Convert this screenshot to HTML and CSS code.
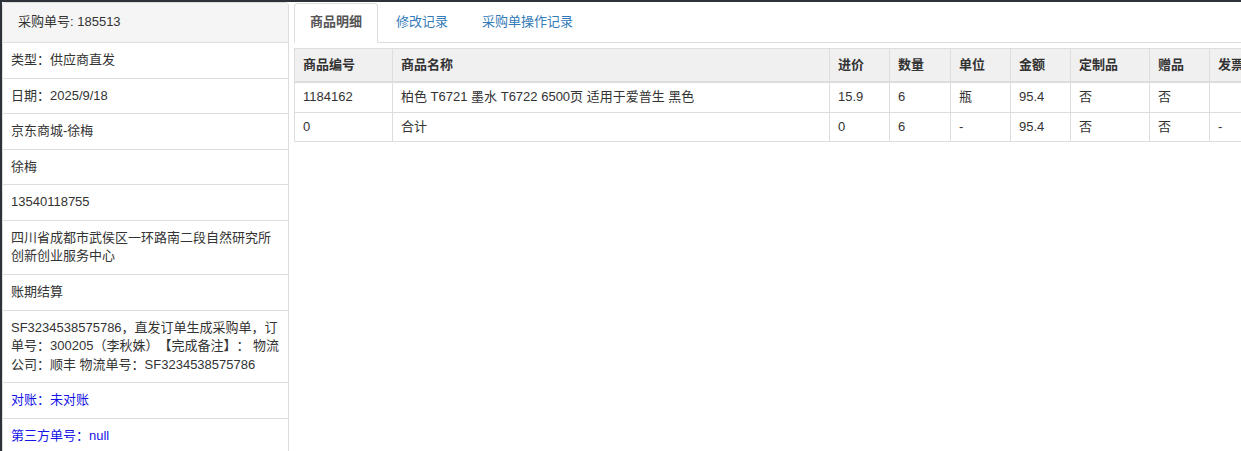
FILE: index.html
```html
<!DOCTYPE html>
<html lang="zh-CN">
<head>
    <meta charset="UTF-8">
    <title>采购单详情</title>
    <link rel="stylesheet" href="styles.css">
</head>
<body>
    <div class="page">
        <div class="panel">
            <div class="panel-heading">采购单号: 185513</div>
            <div class="panel-row">类型：供应商直发</div>
            <div class="panel-row">日期：2025/9/18</div>
            <div class="panel-row">京东商城-徐梅</div>
            <div class="panel-row">徐梅</div>
            <div class="panel-row">13540118755</div>
            <div class="panel-row">四川省成都市武侯区一环路南二段自然研究所创新创业服务中心</div>
            <div class="panel-row">账期结算</div>
            <div class="panel-row">SF3234538575786，直发订单生成采购单，订单号：300205（李秋姝）【完成备注】： 物流公司：顺丰 物流单号：SF3234538575786</div>
            <div class="panel-row blue">对账：未对账</div>
            <div class="panel-row blue">第三方单号：null</div>
        </div>

        <div class="main">
            <ul class="tabs">
                <li class="active"><a>商品明细</a></li>
                <li><a>修改记录</a></li>
                <li><a>采购单操作记录</a></li>
            </ul>

            <table class="goods">
                <colgroup>
                    <col style="width:98px">
                    <col style="width:437px">
                    <col style="width:60px">
                    <col style="width:61px">
                    <col style="width:60px">
                    <col style="width:60px">
                    <col style="width:79px">
                    <col style="width:60px">
                    <col style="width:80px">
                </colgroup>
                <thead>
                    <tr>
                        <th>商品编号</th>
                        <th>商品名称</th>
                        <th>进价</th>
                        <th>数量</th>
                        <th>单位</th>
                        <th>金额</th>
                        <th>定制品</th>
                        <th>赠品</th>
                        <th>发票</th>
                    </tr>
                </thead>
                <tbody>
                    <tr>
                        <td>1184162</td>
                        <td>柏色 T6721 墨水 T6722 6500页 适用于爱普生 黑色</td>
                        <td>15.9</td>
                        <td>6</td>
                        <td>瓶</td>
                        <td>95.4</td>
                        <td>否</td>
                        <td>否</td>
                        <td></td>
                    </tr>
                    <tr>
                        <td>0</td>
                        <td>合计</td>
                        <td>0</td>
                        <td>6</td>
                        <td>-</td>
                        <td>95.4</td>
                        <td>否</td>
                        <td>否</td>
                        <td>-</td>
                    </tr>
                </tbody>
            </table>
        </div>
    </div>
</body>
</html>
```

FILE: styles.css
```css
html, body {
    margin: 0;
    padding: 0;
    height: 100%;
    overflow: hidden;
}
body {
    background: #2d3238;
    font-family: "Liberation Sans", "Noto Sans CJK SC", sans-serif;
    font-size: 13px;
    line-height: 1.42857;
    color: #333;
    text-spacing-trim: space-all;
    font-feature-settings: "chws" 0, "halt" 0;
}
.page {
    display: flex;
    gap: 5px;
    margin: 2px 0 0 2px;
    background: #fff;
    min-height: 100%;
}
.panel {
    width: 285px;
    flex: none;
    border: 1px solid #ddd;
    border-radius: 4px 4px 0 0;
    align-self: flex-start;
}
.panel-heading {
    background: #f5f5f5;
    padding: 10px 15px 10px 15px;
    height: 19px;
    border-radius: 4px 4px 0 0;
}
.panel-row {
    border-top: 1px solid #ddd;
    padding: 8px 8px;
}
.blue {
    color: #1515e8;
}
.main {
    flex: 1;
    min-width: 0;
    overflow: hidden;
}
.tabs {
    list-style: none;
    margin: 0;
    padding: 0;
    display: flex;
    border-bottom: 1px solid #ddd;
}
.tabs li {
    margin: 0 2px -1px 0;
}
.tabs a {
    display: block;
    margin-top: 1px;
    padding: 9px 15px 10px;
    border: 1px solid transparent;
    border-radius: 4px 4px 0 0;
    color: #337ab7;
}
.tabs .active a {
    color: #555;
    font-weight: bold;
    background: #fff;
    border-color: #ddd #ddd transparent;
}
.goods {
    margin-top: 5px;
    border-collapse: collapse;
    table-layout: fixed;
    width: 995px;
}
.goods th, .goods td {
    border: 1px solid #ddd;
    text-align: left;
    white-space: nowrap;
    overflow: hidden;
}
.goods th {
    background: #f0f0f0;
    padding: 7px 8px;
    border-bottom-width: 2px;
}
.goods td {
    padding: 5px 8px;
}
```
